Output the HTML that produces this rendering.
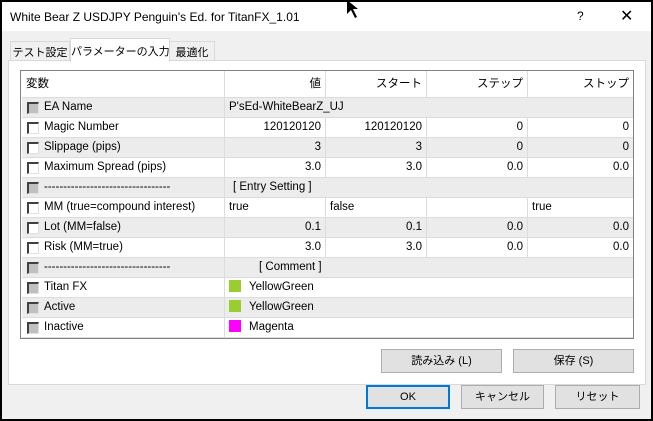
<!DOCTYPE html>
<html><head><meta charset="utf-8"><style>
*{box-sizing:border-box;margin:0;padding:0}
body{width:653px;height:421px;background:#000;position:relative;overflow:hidden;font-family:"Liberation Sans","Noto Sans CJK JP",sans-serif;font-size:11.5px;color:#000}
.win{position:absolute;left:2px;top:2px;width:649px;height:417px;background:#f0f0f0}
.title{position:absolute;left:0;top:0;width:649px;height:29px;background:#fff}
.title span{position:absolute;left:8px;top:8px;font-size:12px}
.abs{position:absolute}
.tab{position:absolute;top:41px;height:20px;border:1px solid #d9d9d9;border-bottom:none;background:#f0f0f0;padding:2px 0;font-size:11px;white-space:nowrap;text-align:center;overflow:hidden}
.panel{position:absolute;left:8px;top:60px;width:638px;height:325px;background:#fff;border:1px solid #d9d9d9}
.tbl{position:absolute;left:20px;top:70px;width:614px;height:269px;border:1px solid #828282;background:#fff}
.row{position:absolute;left:1px;width:611px;height:20px;border-bottom:1px solid #dcdcdc}
.g{background:#ececec}
.c{position:absolute;top:0;height:19px;line-height:19px;border-right:1px solid #dcdcdc;padding:0 4px;white-space:nowrap}
.r{text-align:right}
.cb{position:absolute;left:5px;top:4px;width:12px;height:12px;background:#fff;border-top:2px solid #404040;border-left:2px solid #404040;border-right:1px solid #e0e0e0;border-bottom:1px solid #e0e0e0}
.cb.d{background:#c0c0c0}
.sw{display:inline-block;width:12px;height:12px;vertical-align:-2px;margin-right:8px}
.btn{position:absolute;height:24px;background:#e1e1e1;border:1px solid #adadad;text-align:center;line-height:22px;font-size:11px}
</style></head><body>
<div class="win">
<div class="title"><span>White Bear Z USDJPY Penguin's Ed. for TitanFX_1.01</span>
<span style="left:575px;top:7px">?</span><span style="left:618px;top:4px;font-size:16px">✕</span></div>
</div>
<svg class="abs" style="left:345px;top:0" width="16" height="24"><path d="M2 0 L2 14 L6 10 L10 18 L12 17 L8 9 L13 9 Z" fill="#000"/></svg>
<div class="tab" style="left:10px;width:60px">テスト設定</div>
<div class="tab" style="left:169px;width:46px">最適化</div>
<div class="panel"></div>
<div class="tab" style="left:70px;top:38px;width:100px;height:24px;background:#fff;padding-top:4px">パラメーターの入力</div>
<div class="tbl">
<div class="row" style="top:0;height:27px">
<div class="c" style="left:0;width:203px;height:26px;line-height:26px">変数</div>
<div class="c r" style="left:203px;width:101px;height:26px;line-height:26px">値</div>
<div class="c r" style="left:304px;width:101px;height:26px;line-height:26px">スタート</div>
<div class="c r" style="left:405px;width:101px;height:26px;line-height:26px">ステップ</div>
<div class="c r" style="left:506px;width:105px;height:26px;line-height:26px;border-right:none">ストップ</div>
</div>
<div class="row g" style="top:27px"><div class="cb d"></div><div class="c" style="left:0;width:203px;padding-left:22px">EA Name</div><div class="c" style="left:203px;width:300px;border:none">P'sEd-WhiteBearZ_UJ</div></div>
<div class="row" style="top:47px"><div class="cb"></div><div class="c" style="left:0;width:203px;padding-left:22px">Magic Number</div><div class="c r" style="left:203px;width:101px">120120120</div><div class="c r" style="left:304px;width:101px">120120120</div><div class="c r" style="left:405px;width:101px">0</div><div class="c r" style="left:506px;width:105px;border:none">0</div></div>
<div class="row g" style="top:67px"><div class="cb"></div><div class="c" style="left:0;width:203px;padding-left:22px">Slippage (pips)</div><div class="c r" style="left:203px;width:101px">3</div><div class="c r" style="left:304px;width:101px">3</div><div class="c r" style="left:405px;width:101px">0</div><div class="c r" style="left:506px;width:105px;border:none">0</div></div>
<div class="row" style="top:87px"><div class="cb"></div><div class="c" style="left:0;width:203px;padding-left:22px">Maximum Spread (pips)</div><div class="c r" style="left:203px;width:101px">3.0</div><div class="c r" style="left:304px;width:101px">3.0</div><div class="c r" style="left:405px;width:101px">0.0</div><div class="c r" style="left:506px;width:105px;border:none">0.0</div></div>
<div class="row g" style="top:107px"><div class="cb d"></div><div class="c" style="left:0;width:203px;padding-left:22px">---------------------------------</div><div class="c" style="left:203px;width:300px;border:none;padding-left:8px">[ Entry Setting ]</div></div>
<div class="row" style="top:127px"><div class="cb"></div><div class="c" style="left:0;width:203px;padding-left:22px">MM (true=compound interest)</div><div class="c" style="left:203px;width:101px">true</div><div class="c" style="left:304px;width:101px">false</div><div class="c" style="left:405px;width:101px"></div><div class="c" style="left:506px;width:105px;border:none">true</div></div>
<div class="row g" style="top:147px"><div class="cb"></div><div class="c" style="left:0;width:203px;padding-left:22px">Lot (MM=false)</div><div class="c r" style="left:203px;width:101px">0.1</div><div class="c r" style="left:304px;width:101px">0.1</div><div class="c r" style="left:405px;width:101px">0.0</div><div class="c r" style="left:506px;width:105px;border:none">0.0</div></div>
<div class="row" style="top:167px"><div class="cb"></div><div class="c" style="left:0;width:203px;padding-left:22px">Risk (MM=true)</div><div class="c r" style="left:203px;width:101px">3.0</div><div class="c r" style="left:304px;width:101px">3.0</div><div class="c r" style="left:405px;width:101px">0.0</div><div class="c r" style="left:506px;width:105px;border:none">0.0</div></div>
<div class="row g" style="top:187px"><div class="cb d"></div><div class="c" style="left:0;width:203px;padding-left:22px">---------------------------------</div><div class="c" style="left:203px;width:300px;border:none;padding-left:34px">[ Comment ]</div></div>
<div class="row" style="top:207px"><div class="cb d"></div><div class="c" style="left:0;width:203px;padding-left:22px">Titan FX</div><div class="c" style="left:203px;width:300px;border:none"><span class="sw" style="background:#9acd32"></span>YellowGreen</div></div>
<div class="row g" style="top:227px"><div class="cb d"></div><div class="c" style="left:0;width:203px;padding-left:22px">Active</div><div class="c" style="left:203px;width:300px;border:none"><span class="sw" style="background:#9acd32"></span>YellowGreen</div></div>
<div class="row" style="top:247px"><div class="cb d"></div><div class="c" style="left:0;width:203px;padding-left:22px">Inactive</div><div class="c" style="left:203px;width:300px;border:none"><span class="sw" style="background:#ff00ff"></span>Magenta</div></div>
</div>
<div class="btn" style="left:381px;top:349px;width:121px">読み込み (L)</div>
<div class="btn" style="left:513px;top:349px;width:121px">保存 (S)</div>
<div class="btn" style="left:366px;top:385px;width:84px;border:2px solid #0078d7;line-height:20px">OK</div>
<div class="btn" style="left:461px;top:385px;width:83px">キャンセル</div>
<div class="btn" style="left:555px;top:385px;width:85px">リセット</div>
</body></html>
